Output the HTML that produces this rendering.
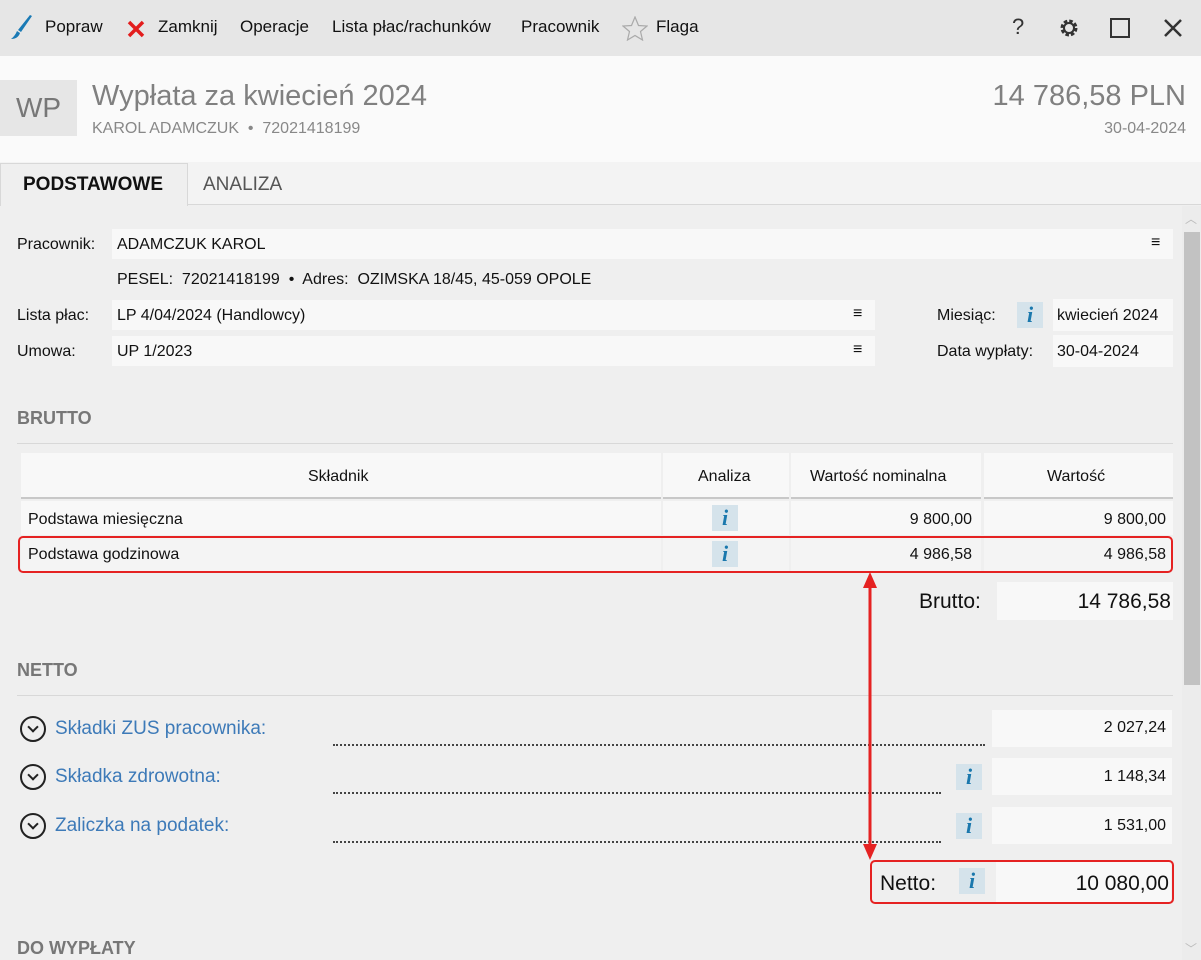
<!DOCTYPE html><html><head><meta charset="utf-8"><style>
*{margin:0;padding:0;box-sizing:border-box}
body{width:1201px;height:960px;overflow:hidden;background:#efefef;font-family:"Liberation Sans",sans-serif;font-size:16px;color:#111;position:relative}
.a{position:absolute;white-space:nowrap}
.f{position:absolute;background:#f8f8f8}
.i{position:absolute;width:26px;height:26px;background:#d5e3eb;color:#1a78ad;font:italic bold 22px "Liberation Serif",serif;text-align:center;line-height:26px}
.r{text-align:right}
.h{font-weight:bold;color:#777;font-size:18px}
.ln{position:absolute;height:1px;background:#d8d8d8}
.dot{position:absolute;border-top:2px dotted #444;height:0}
.ch{position:absolute;width:26px;height:26px;border:2px solid #222;border-radius:50%}
.ch:after{content:"";position:absolute;left:7px;top:5px;width:6px;height:6px;border-right:2.5px solid #222;border-bottom:2.5px solid #222;transform:rotate(45deg)}
.bl{color:#3d7ab8;font-size:19px}
</style></head><body>
<div class="a" style="left:0;top:0;width:1201px;height:56px;background:#e6e6e6"></div>
<svg class="a" style="left:10px;top:14px" width="24" height="26" viewBox="0 0 24 26"><path d="M22 2 L20 1 L8 16 L11 18 Z" fill="#1a7ab5"/><path d="M7 17 L10 19 Q8 25 1 25 Q5 22 7 17Z" fill="#1a7ab5"/></svg>
<div class="a" style="left:45px;top:17px;font-size:17px">Popraw</div>
<svg class="a" style="left:126px;top:19px" width="20" height="20"><path d="M3 3L17 17M17 3L3 17" stroke="#e31d1d" stroke-width="3.5"/></svg>
<div class="a" style="left:158px;top:17px;font-size:17px">Zamknij</div>
<div class="a" style="left:240px;top:17px;font-size:17px">Operacje</div>
<div class="a" style="left:332px;top:17px;font-size:17px">Lista płac/rachunków</div>
<div class="a" style="left:521px;top:17px;font-size:17px">Pracownik</div>
<svg class="a" style="left:622px;top:16px" width="26" height="25" viewBox="0 0 26 25"><path d="M13 1L16.5 9.5L25 10L18.5 15.5L20.5 24L13 19.5L5.5 24L7.5 15.5L1 10L9.5 9.5Z" fill="none" stroke="#aaa" stroke-width="1.2"/></svg>
<div class="a" style="left:656px;top:17px;font-size:17px">Flaga</div>
<div class="a" style="left:1012px;top:14px;font-size:22px;color:#333">?</div>
<svg class="a" style="left:1058px;top:17px" width="22" height="22" viewBox="0 0 22 22"><circle cx="11" cy="11" r="7" fill="none" stroke="#333" stroke-width="3" stroke-dasharray="3.5 2"/><circle cx="11" cy="11" r="5" fill="none" stroke="#333" stroke-width="2"/></svg>
<div class="a" style="left:1110px;top:18px;width:20px;height:20px;border:2.5px solid #333"></div>
<svg class="a" style="left:1163px;top:18px" width="20" height="20"><path d="M2 2L18 18M18 2L2 18" stroke="#333" stroke-width="2.5"/></svg>
<div class="a" style="left:0;top:56px;width:1201px;height:106px;background:#fafafa"></div>
<div class="a" style="left:0;top:80px;width:77px;height:56px;background:#e6e6e6;color:#777;font-size:28px;text-align:center;line-height:56px">WP</div>
<div class="a" style="left:92px;top:80px;font-size:29px;color:#808080">Wypłata za kwiecień 2024</div>
<div class="a" style="left:92px;top:120px;font-size:16px;color:#888">KAROL ADAMCZUK &nbsp;•&nbsp; 72021418199</div>
<div class="a r" style="right:15px;top:80px;font-size:29px;color:#808080">14 786,58 PLN</div>
<div class="a r" style="right:15px;top:120px;font-size:16px;color:#888">30-04-2024</div>
<div class="a" style="left:0;top:162px;width:1201px;height:43px;background:#f3f3f3;border-bottom:1px solid #d8d8d8"></div>
<div class="a" style="left:0;top:163px;width:188px;height:43px;background:#efefef;border:1px solid #d8d8d8;border-bottom:none"></div>
<div class="a" style="left:23px;top:174px;font-size:19px;font-weight:bold">PODSTAWOWE</div>
<div class="a" style="left:203px;top:174px;font-size:19px;color:#555">ANALIZA</div>
<div class="a" style="left:1182px;top:206px;width:19px;height:754px;background:#ececec"></div>
<div class="a" style="left:1184px;top:232px;width:16px;height:453px;background:#c2c2c2"></div>
<div class="a" style="left:1185px;top:210px;color:#bbb;font-size:12px">︿</div>
<div class="a" style="left:1185px;top:940px;color:#bbb;font-size:12px">﹀</div>

<div class="a" style="left:17px;top:236px">Pracownik:</div>
<div class="f" style="left:112px;top:229px;width:1061px;height:30px"></div>
<div class="a" style="left:117px;top:236px">ADAMCZUK KAROL</div>
<div class="a" style="left:1151px;top:234px">≡</div>
<div class="a" style="left:117px;top:271px">PESEL:&nbsp; 72021418199 &nbsp;•&nbsp; Adres:&nbsp; OZIMSKA 18/45, 45-059 OPOLE</div>
<div class="a" style="left:17px;top:307px">Lista płac:</div>
<div class="f" style="left:112px;top:300px;width:763px;height:30px"></div>
<div class="a" style="left:117px;top:307px">LP 4/04/2024 (Handlowcy)</div>
<div class="a" style="left:853px;top:305px">≡</div>
<div class="a" style="left:17px;top:343px">Umowa:</div>
<div class="f" style="left:112px;top:336px;width:763px;height:30px"></div>
<div class="a" style="left:117px;top:343px">UP 1/2023</div>
<div class="a" style="left:853px;top:341px">≡</div>
<div class="a" style="left:937px;top:307px">Miesiąc:</div>
<div class="i" style="left:1017px;top:302px">i</div>
<div class="f" style="left:1053px;top:299px;width:120px;height:32px"></div>
<div class="a" style="left:1057px;top:307px">kwiecień 2024</div>
<div class="a" style="left:937px;top:343px">Data wypłaty:</div>
<div class="f" style="left:1053px;top:335px;width:120px;height:32px"></div>
<div class="a" style="left:1057px;top:343px">30-04-2024</div>

<div class="a h" style="left:17px;top:408px">BRUTTO</div>
<div class="ln" style="left:17px;top:443px;width:1156px"></div>
<div class="f" style="left:21px;top:453px;width:640px;height:46px;border-bottom:2px solid #c8c8c8"></div>
<div class="f" style="left:663px;top:453px;width:126px;height:46px;border-bottom:2px solid #c8c8c8"></div>
<div class="f" style="left:791px;top:453px;width:190px;height:46px;border-bottom:2px solid #c8c8c8"></div>
<div class="f" style="left:984px;top:453px;width:189px;height:46px;border-bottom:2px solid #c8c8c8"></div>
<div class="a" style="left:308px;top:468px">Składnik</div>
<div class="a" style="left:698px;top:468px">Analiza</div>
<div class="a" style="left:810px;top:468px">Wartość nominalna</div>
<div class="a" style="left:1047px;top:468px">Wartość</div>
<div class="f" style="left:21px;top:501px;width:640px;height:34px"></div>
<div class="f" style="left:663px;top:501px;width:126px;height:34px"></div>
<div class="f" style="left:791px;top:501px;width:190px;height:34px"></div>
<div class="f" style="left:984px;top:501px;width:189px;height:34px"></div>
<div class="f" style="left:21px;top:537px;width:640px;height:34px;background:#f4f4f4"></div>
<div class="f" style="left:663px;top:537px;width:126px;height:34px;background:#f4f4f4"></div>
<div class="f" style="left:791px;top:537px;width:190px;height:34px;background:#f4f4f4"></div>
<div class="f" style="left:984px;top:537px;width:189px;height:34px;background:#f4f4f4"></div>
<div class="a" style="left:28px;top:511px">Podstawa miesięczna</div>
<div class="i" style="left:712px;top:505px">i</div>
<div class="a r" style="right:229px;top:511px">9 800,00</div>
<div class="a r" style="right:35px;top:511px">9 800,00</div>
<div class="a" style="left:28px;top:546px">Podstawa godzinowa</div>
<div class="i" style="left:712px;top:541px">i</div>
<div class="a r" style="right:229px;top:546px">4 986,58</div>
<div class="a r" style="right:35px;top:546px">4 986,58</div>
<div class="a" style="left:18px;top:536px;width:1155px;height:37px;border:2px solid #e52222;border-radius:5px"></div>
<div class="a" style="left:919px;top:590px;font-size:21px">Brutto:</div>
<div class="f" style="left:997px;top:582px;width:176px;height:38px"></div>
<div class="a r" style="right:30px;top:590px;font-size:21px">14 786,58</div>

<div class="a h" style="left:17px;top:660px">NETTO</div>
<div class="ln" style="left:17px;top:695px;width:1156px"></div>
<div class="ch" style="left:20px;top:716px"></div>
<div class="a bl" style="left:55px;top:718px">Składki ZUS pracownika:</div>
<div class="dot" style="left:333px;top:744px;width:652px"></div>
<div class="f" style="left:992px;top:710px;width:180px;height:37px"></div>
<div class="a r" style="right:35px;top:719px">2 027,24</div>
<div class="ch" style="left:20px;top:764px"></div>
<div class="a bl" style="left:55px;top:766px">Składka zdrowotna:</div>
<div class="dot" style="left:333px;top:792px;width:608px"></div>
<div class="i" style="left:956px;top:764px">i</div>
<div class="f" style="left:992px;top:758px;width:180px;height:37px"></div>
<div class="a r" style="right:35px;top:768px">1 148,34</div>
<div class="ch" style="left:20px;top:813px"></div>
<div class="a bl" style="left:55px;top:815px">Zaliczka na podatek:</div>
<div class="dot" style="left:333px;top:841px;width:608px"></div>
<div class="i" style="left:956px;top:813px">i</div>
<div class="f" style="left:992px;top:807px;width:180px;height:37px"></div>
<div class="a r" style="right:35px;top:817px">1 531,00</div>
<div class="f" style="left:996px;top:862px;width:175px;height:40px"></div>
<div class="a" style="left:880px;top:872px;font-size:21px">Netto:</div>
<div class="i" style="left:959px;top:868px">i</div>
<div class="a r" style="right:32px;top:872px;font-size:21px">10 080,00</div>
<div class="a" style="left:870px;top:860px;width:304px;height:44px;border:2px solid #e52222;border-radius:5px"></div>
<svg class="a" style="left:858px;top:570px" width="24" height="292"><path d="M12 14V278" stroke="#e52222" stroke-width="3"/><path d="M5 18L12 2L19 18Z M5 274L12 290L19 274Z" fill="#e52222"/></svg>
<div class="a h" style="left:17px;top:938px">DO WYPŁATY</div>
</body></html>
